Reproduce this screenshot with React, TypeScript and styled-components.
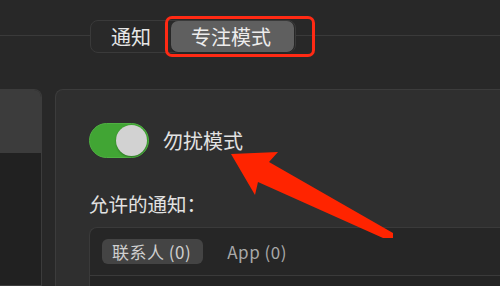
import styled, { createGlobalStyle } from 'styled-components';

const GlobalStyle = createGlobalStyle`
  html, body {
    margin: 0;
    padding: 0;
    background: #282828;
    overflow: hidden;
  }
  body {
    font-family: "Noto Sans CJK SC", "Noto Sans", sans-serif;
    color: #e2e2e2;
  }
`;

const Page = styled.div`
  position: relative;
  width: 500px;
  height: 286px;
  overflow: hidden;
  background: #282828;
  display: flex;
  flex-direction: column;
`;

const Header = styled.div`
  height: 89px;
  box-sizing: border-box;
  padding: 20px 0 0 90px;
  background: linear-gradient(#3a3a3a, #3a3a3a) 0 35px / 100% 1px no-repeat;
`;

const Segmented = styled.div`
  display: inline-flex;
  align-items: center;
  height: 33px;
  box-sizing: border-box;
  padding: 1px;
  border: 1px solid #3a3a3a;
  border-radius: 8px;
  background: #292929;
`;

const Segment = styled.div<{ $active?: boolean }>`
  height: 31px;
  display: flex;
  align-items: center;
  justify-content: center;
  box-sizing: border-box;
  padding: ${({ $active }) => ($active ? '0 23px 0 20px' : '0 20px 0 19px')};
  border-radius: 7px;
  font-size: 20px;
  color: ${({ $active }) => ($active ? '#ececec' : '#e6e6e6')};
  background: ${({ $active }) => ($active ? '#5f5f5f' : 'transparent')};
  box-shadow: ${({ $active }) => ($active ? '0 1px 1px rgba(0,0,0,0.35)' : 'none')};
`;

const Highlight = styled.div`
  position: absolute;
  left: 165px;
  top: 16px;
  width: 150px;
  height: 41px;
  box-sizing: border-box;
  border: 3px solid #ff2a14;
  border-radius: 7px;
  pointer-events: none;
`;

const Body = styled.div`
  flex: 1;
  display: flex;
  gap: 13px;
`;

const Sidebar = styled.div`
  width: 41px;
  flex-shrink: 0;
  border-top-right-radius: 8px;
  border: 1px solid #3c3c3c;
  border-left: none;
  overflow: hidden;
  display: flex;
  flex-direction: column;
`;

const SidebarTop = styled.div`
  height: 63px;
  background: #3c3c3c;
`;

const SidebarRest = styled.div`
  flex: 1;
  background: #212121;
`;

const Panel = styled.div`
  flex: 1;
  box-sizing: border-box;
  padding: 33px 0 0 33px;
  background: #2f2f2f;
  border: 1px solid #3c3c3c;
  border-right: none;
  border-bottom: none;
  border-top-left-radius: 8px;
  display: flex;
  flex-direction: column;
`;

const ToggleRow = styled.div`
  display: flex;
  align-items: center;
  gap: 14px;
`;

const Switch = styled.div<{ $on: boolean }>`
  width: 60px;
  height: 35px;
  box-sizing: border-box;
  border-radius: 18px;
  background: ${({ $on }) => ($on ? '#41a534' : '#555')};
  border: 1px solid ${({ $on }) => ($on ? '#4fb042' : '#666')};
  display: flex;
  align-items: center;
  justify-content: ${({ $on }) => ($on ? 'flex-end' : 'flex-start')};
  padding: 0 1px;
`;

const Knob = styled.div`
  width: 31px;
  height: 31px;
  border-radius: 50%;
  background: #d2d2d2;
  box-shadow: 0 1px 2px rgba(0, 0, 0, 0.3);
`;

const ToggleLabel = styled.span`
  font-size: 20px;
  line-height: 26px;
  color: #e2e2e2;
`;

const SectionLabel = styled.div`
  margin-top: 33px;
  font-size: 19.5px;
  line-height: 26px;
  color: #e2e2e2;
`;

const ListBox = styled.div`
  margin-top: 10px;
  flex: 1;
  background: #262626;
  border: 1px solid #3a3a3a;
  border-right: none;
  border-bottom: none;
  border-top-left-radius: 8px;
  display: flex;
  flex-direction: column;
`;

const TabRow = styled.div`
  height: 48px;
  box-sizing: border-box;
  padding: 11px 0 0 12px;
  display: flex;
  align-items: flex-start;
  gap: 14px;
  border-bottom: 1px solid #3a3a3a;
`;

const Tab = styled.div<{ $active?: boolean }>`
  height: 25px;
  display: flex;
  align-items: center;
  padding: 0 12px 0 10px;
  border-radius: 6px;
  font-size: 17px;
  letter-spacing: 0.5px;
  color: ${({ $active }) => ($active ? '#cfcfcf' : '#a9a9a9')};
  background: ${({ $active }) => ($active ? '#444444' : 'transparent')};
`;

const ListBody = styled.div`
  flex: 1;
  background: #242424;
`;

const Arrow = styled.svg`
  position: absolute;
  left: 0;
  top: 0;
  pointer-events: none;
`;

export default function App() {
  return (
    <Page>
      <GlobalStyle />
      <Header>
        <Segmented>
          <Segment>通知</Segment>
          <Segment $active>专注模式</Segment>
        </Segmented>
      </Header>
      <Body>
        <Sidebar>
          <SidebarTop />
          <SidebarRest />
        </Sidebar>
        <Panel>
          <ToggleRow>
            <Switch $on>
              <Knob />
            </Switch>
            <ToggleLabel>勿扰模式</ToggleLabel>
          </ToggleRow>
          <SectionLabel>允许的通知：</SectionLabel>
          <ListBox>
            <TabRow>
              <Tab $active>联系人 (0)</Tab>
              <Tab>App (0)</Tab>
            </TabRow>
            <ListBody />
          </ListBox>
        </Panel>
      </Body>
      <Highlight />
      <Arrow width="500" height="286" viewBox="0 0 500 286">
        <polygon
          points="231,154 278,152 269,162 393,233 393,238 383,238 258,182 255,195"
          fill="#ff2400"
        />
      </Arrow>
    </Page>
  );
}
